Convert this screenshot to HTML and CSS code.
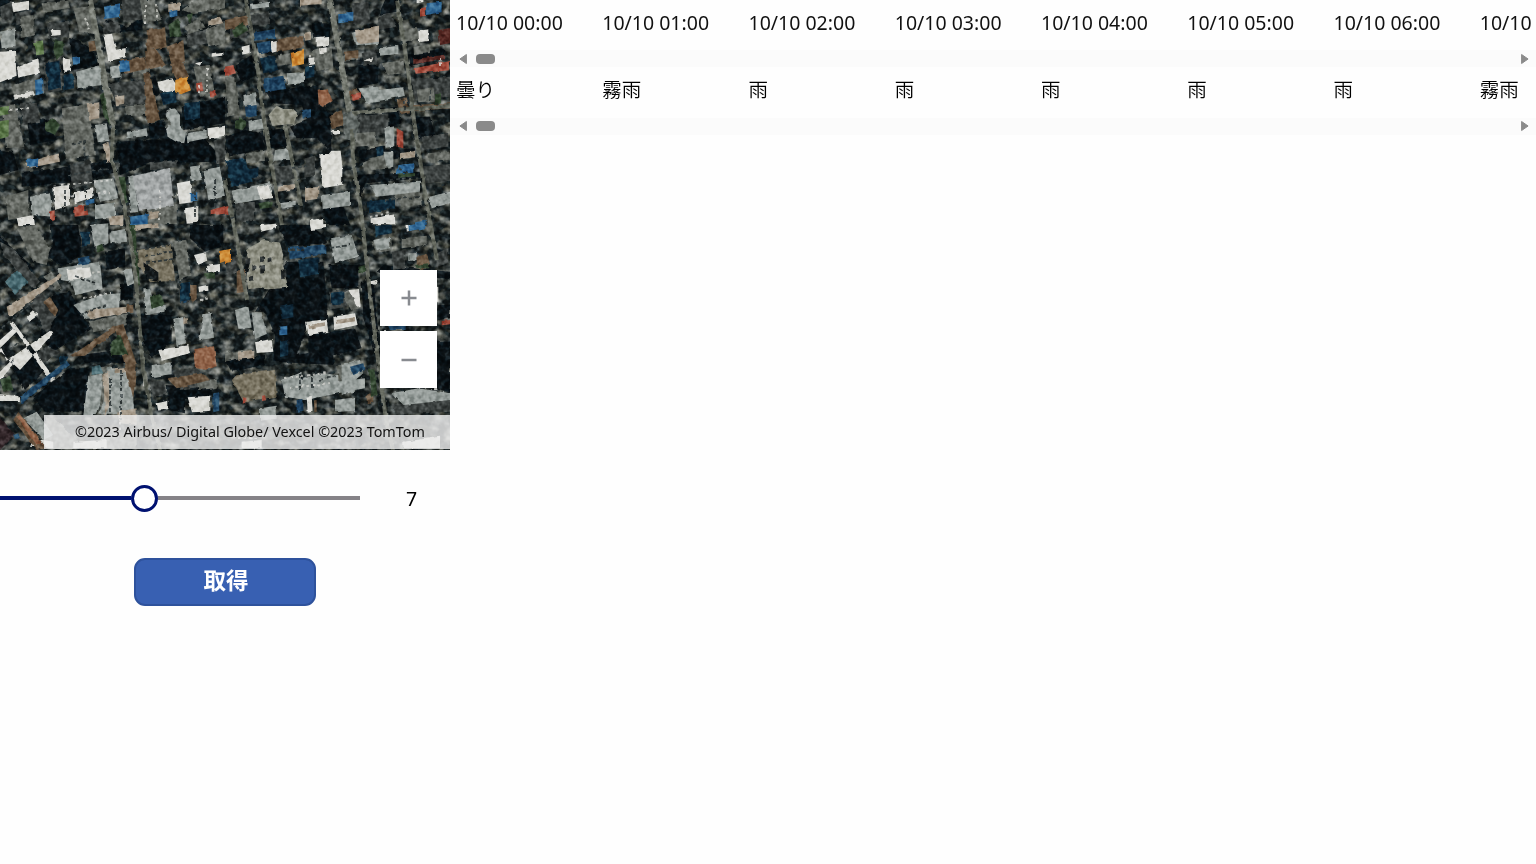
FILE: index.html
```html
<!DOCTYPE html>
<html lang="ja">
<head>
<meta charset="utf-8">
<title>Weather</title>
<link rel="stylesheet" href="styles.css">
</head>
<body>
<div class="app">
  <aside class="side">
    <div class="map">
      <svg class="aerial" viewBox="0 0 450 450" width="450" height="450" aria-hidden="true">
        <defs>
          <filter id="soft" x="0" y="0" width="100%" height="100%" color-interpolation-filters="sRGB">
            <feTurbulence type="fractalNoise" baseFrequency=".12" numOctaves="2" seed="4" result="n"/>
            <feDisplacementMap in="SourceGraphic" in2="n" scale="3.2" xChannelSelector="R" yChannelSelector="G"/>
            <feGaussianBlur stdDeviation=".6"/>
          </filter>
          <filter id="clutter" x="0" y="0" width="100%" height="100%" color-interpolation-filters="sRGB">
            <feTurbulence type="fractalNoise" baseFrequency=".09 .12" numOctaves="2" seed="21"/>
            <feColorMatrix values=".6 2 0 0 -1.15  .55 2 .05 0 -1.15  .45 1.9 .15 0 -1.12  0 0 0 0 1"/>
          </filter>
          <filter id="grain" x="0" y="0" width="100%" height="100%" color-interpolation-filters="sRGB">
            <feTurbulence type="fractalNoise" baseFrequency=".2" numOctaves="2" seed="8"/>
            <feColorMatrix values="1.5 1.5 0 0 -1  1.5 1.5 0 0 -1  1.5 1.5 0 0 -1  0 0 0 0 1"/>
          </filter>
        </defs>
        <rect class="base" width="450" height="450"/>
        <rect class="ground" width="450" height="450" filter="url(#clutter)"/>
        <g filter="url(#soft)">
          <rect class="frame" width="450" height="450"/>
          <!-- north-west block -->
          <g transform="scale(.33333)">
            <path class="shade" d="M350 425l260-15 50 60-10 15-200 5-90 35zM65 520l270-40 20 35-120 30-170 15zM80 350l60 10 30 60-80 15zM210 110l70 40 20 45-80 15zM0 450l40 5 15 55-55 15zM320 60l60 20 50-30-5 40-110 10zM445 370l45-10 20 60-60-5zM545 320l130-30v80l-125 20zM0 0l35 0-10 20-25 10zM465 225l-15 35 20 30 10-10z"/>
            <path class="dim" d="M0 20l35-15 5 50-35 15zM45 40l50-10 0 35-45 10zM140 70l65-5 3 45-60 5zM305 70l50-5 5 30-50 5zM325 250l110-10 5 70-90 10zM365 0l60-5 5 60-60 10zM130 185l50-5 10 90-50 8zM210 490l60-10 10 70-65 15zM450 490l80-10 0 20-80 10zM640 420l35-5v70l-25 5zM60 310l50-5 10 60-50 10zM560 100l60-10 5 40-60 10z"/>
            <path class="grey" d="M60 50l40-5 5 60-40 10zM125 10l80-8 5 22-80 12zM420 0l45 0 20 60-55 10zM185 325l75-12 10-5 28 5v50l-25 5 15 95-90 14zM395 185l50-8 5 40-50 8zM580 200l50-5 15 90-45 5zM555 80l40-25 20 30-50 18zM615 90l60-25v65l-50 12zM375 320l60-8 5 32-60 5zM5 320l40-5 28 125-55 5zM35 255l90-20 5 45-85 20zM220 25l60-8 8 85-50-5zM545 30l50-35 80-5v35l-100 15zM15 590l70-20v80l-60 10zM440 620l90-8v60h-85z"/>
            <path class="light" d="M500 330l25-5 15 20v35l18 20-5 30-25-5-25-15-5-25 12-15-12-20zM0 95l45-10 2 55-42 5zM228 215l75-20 5 60-75 10zM330 200l30-5 2 40-30 3zM380 395l60-10 3 22-60 8zM285 375l35-5 8 52-35 5zM560 400l60-10 0 25-58 12zM90 590l60-10 10 70-65-5zM280 540l60-5 15 60-55 10zM570 500l30-5 5 45-30 3zM610 510l50-10 15 90-50 10zM385 530l15-5 15 110-22 3zM285 615l60-8v45l-60 5z"/>
            <path class="roof" d="M398 528l112-25 12 115-105 15z"/>
            <path class="white" d="M310 104l26-3 12 48 29-5v28l-52 12zM0 155l45-3 5 75-50 20zM50 200l65-22 5 40-65 15zM188 175l22 3 5 35-25 3zM152 90l30 0v15l-25 3zM472 245l45-10 18 30-25 15-30-10zM585 190l20-5-5 12zM635 160l35-5v12l-35 3zM622 385l53-8v30l-50 8zM530 550l40-8 8 65-40 5zM160 560l50-5v60l-45 15zM220 580l60-15v25l-55 20zM555 625l40-7v50l-35 3zM50 655l50-10 5 30h-50zM40 285l60-12 5 13-60 12zM35 10l55-8v25l-50 10z"/>
            <path class="tan" d="M325 425l12 60-15 3-15-55zM505 12l35-5v25l-35 5zM260 312l38-5v48l-30 5zM625 60l35-10 10 20-45 8zM445 635l30-5v25l-28 5zM325 650l45-5v30h-40zM75 490l100-30 5 25-95 20zM345 290l28-4v25l-25 5z"/>
            <path class="brown" d="M440 90l55-8 5 60-60 10zM435 150l35 0 30 45-60 15zM500 140l50-20 5 65-40 10zM430 220l20 0 30 140-40 10zM360 180l75-8 5 35-65 15zM265 125l30-5 3 30-30 5zM510 195l40-8 15 45-35 10z"/>
            <path class="foliage" d="M135 370l25-15 20 20-15 30-30-15zM165 120l25 5v35l-20 20-10-30zM505 75l30-20 10 50-35 10zM560 45l20-8-10 35zM300 285l15-10 30 85-15 15-20-30zM355 530l20 0 10 75-15 10z"/>
            <path class="lime" d="M102 127l27-6 3 42-22 4zM0 322l27-5v25l-27 5zM0 364l26-5v55l-26 5z"/>
            <path class="blue" d="M312 20l48-10v40l-45 7zM355 187l32-8 3 34-30 4zM217 172l23-4v22l-20 5zM105 240l22-4v45l-20 5zM390 650l53-8v30l-50 8zM572 580l20-4v25l-20 4zM80 480l35-5-2 22-30 5zM507 35l25-5v18l-22 5zM258 600l25-4v16l-22 4z"/>
            <path class="orange" d="M526 240l35-9 12 40-30 12-18-6z"/>
            <path class="red" d="M588 250l18-3 4 26-20 2zM628 272l18-6v20l-15 5zM222 622l35-7 5 30-38 5zM632 630l43-12v20l-43 5zM150 635l14-4v30l-14 2z"/>
            <path class="navy" d="M138 190l40-8 5 80-38 10zM480 280l45-8 5 35-40 8zM190 225l28-5 5 45-30 5zM550 310l50-5v50l-45 5z"/>
          </g>
          <!-- north-east block -->
          <g transform="translate(225) scale(.33333)">
            <path class="shade" d="M120 275l160-20 5 60 30 30 5 110-45-40-60 0-20-35 50-20-15-45-90-5zM30 195l50-30 15 60-45 20zM465 325l50-5 15 50-45 15zM400 450l80-10v20l-75 25zM500 450l70-5v20l-65 10zM560 350l55 0 20 70-55-5zM400 525l190-10v20l-170 15-15 60zM260 70l55 0v40l-50 5zM480 0l35 0v35l-55 10zM0 410l60-20 50 10 10 45-110 25zM400 195l60 0v55l-60 10zM100 395l80-10 10 55-60 5zM295 625l60-5 20 55h-70zM540 165l120-20v30l-115 25z"/>
            <path class="dim" d="M75 45l60-8v35l-60 5zM380 10l50-5 5 65-50 5zM460 50l35-10 20 40-60 10zM15 75l50-5v40l-50 8zM390 350l100-10v60l-100 5zM560 240l115-10v60l-105 10zM240 475l30-8v60l-32 6zM590 500l85-8v50l-85 10zM30 610l60-5v55l-55 5zM150 500l60-5v40l-60 8zM590 410l80-10v40l-80 10zM410 160l40-15 10 45-45 8z"/>
            <path class="grey" d="M160 165l35-5 3 32-37 5zM260 150l60-10 5 65-50 8zM340 170l60-15v25l-60 8zM530 90l45-10 10 35-45 10zM390 400l60-5 10 40-70 5zM410 490l70-30 20 45-85 8zM575 270l50-8 5 40-50 5zM610 460l65-8v27l-60 8zM60 460l60-8v30l-55 8zM0 230l30 0 15 110-35 10zM470 190l65-10 5 40-55 5zM565 140l45-6 5 25-48 6zM505 580l80-5 5 40-60 5z"/>
            <path class="stone" d="M130 345l25-28 20 10 30 0 15 15-10 30-68 5z"/>
            <path class="light" d="M380 98l82-17v50l-70 8zM400 265l60-5 5 45-40 5zM460 270l75-8 5 25-75 15zM70 365l48-10 5 30-50 6zM478 385l30-6v60l-25 4zM185 220l52-4v33l-50 5zM55 285l35-5 5 35-35 5zM465 145l55-8v25l-55 5zM610 590l65-15v35l-55 15zM435 555l150-10v30l-130 15zM290 585l85-10v42l-82 10zM150 450l45-6v35l-50 4zM75 15l60-10v15l-58 8zM475 455l30 0v45l-20 5zM20 572l115-25 8 45-115 20zM165 610l50-8v16l-45 8z"/>
            <path class="white" d="M286 462l25 0 8-10 28 0 5 42v60l-60 10-5-60zM580 93l30-5v35l-28 4zM138 127l20-5v32l-20 5zM272 115l40-4v25l-40 4zM320 390l25 0v12l-20 2zM250 175l18-3v20l-16 3zM410 182l35-10-5 12zM285 145l20-3v18l-18 3zM575 0l20 0v6l-20 4zM95 560l35-6 12 40-35 5zM255 660l40-5v20h-40zM440 655l70-12v30h-70zM50 140l24-6v25l-22 5z"/>
            <path class="tan" d="M240 98l18-4v25l-18 3zM390 90l72-10v45l-65 8zM160 560l50-8v15l-50 8zM525 460l45-8v20l-45 6zM240 565l40-4v35l-40 6zM225 0l65 0v12l-65 5z"/>
            <path class="brown" d="M155 115l80-8v35l-80 15zM370 275l20-12 20 20-20 20-20-5zM310 350l40-20 10 45-40 10zM360 155l40-5v25l-40 6zM0 60l70-15 0 30-70 15zM565 315l110-5v15l-110 8zM515 300l30-8 10 45-30 5z"/>
            <path class="blue" d="M340 40l45-5v30l-45 5zM10 482l48-8v22l-48 6zM605 10l45-5v32l-45 8zM520 495l45-5v28l-50 5zM570 667l35-5v13h-35z"/>
            <path class="deep" d="M95 130l40-8 5 35-38 6zM115 235l60-8 8 40-62 10zM60 320l35-4v32l-32 5zM85 98l65-12v28l-60 8zM230 330l28-3v25l-25 4z"/>
            <path class="orange" d="M197 158l40-8v42l-35 8z"/>
            <path class="clay" d="M278 272l30-4 15 35-30 18-12-10z"/>
            <path class="red" d="M568 205l104-22v28l-100 10zM380 282l28-5v20l-25 5zM0 200l25-5 8 25-33 8zM515 385l20 10v50l-20-5zM585 25l18-3v25l-18 3zM0 620l14-3v24l-14 3z"/>
            <path class="maroon" d="M640 90l35-5v45l-30 5zM565 178l95-14v14l-95 14z"/>
            <path class="foliage" d="M30 365l15-15 20 20-15 20-20-5zM20 90l35-25 15 25-40 25zM630 285l18-3v25l-18 5zM520 520l50 0v8l-50 5zM100 610l40-8v20l-35 5z"/>
            <path class="navy" d="M105 175l45-8 10 45-45 8zM65 510l35-8v30l-35 5zM425 605l85-10v30l-80 15zM240 200l28-5v35l-28 5zM455 445l20-5v25l-20 5zM0 480l60-5 20 70-60 15z"/>
          </g>
          <!-- south-west block -->
          <g transform="translate(0 225) scale(.33333)">
            <path class="shade" d="M150 0l85 0 10 90-60 35-45-35 20-30zM210 430l60 0-15 130-120 0-35-45zM415 270l100 0v80l-60 50-25-60zM160 210l50-10 60 110-110 70-40-50zM240 390l150-20 5 45-140-5zM40 430l60-60 35 65-60 60zM570 0l100 0v60l-55 20-45-40zM500 480l135 10v20l-80 15v40l-50-10zM0 30l100 100-5 20-95-90zM360 180l40-10v50l-40 10zM315 80l60-10v55l-55 10z"/>
            <path class="dim" d="M80 225l45-20 45 70-30 50zM450 470l45-5 5 45-45 5zM0 50l40 20 80 100-20 20-90-100zM535 180l35-5v55l-30 5zM520 440l70-10 40 50-90 15zM100 395l40-30 40 15-50 35zM15 170l30-40 45 30-40 50z"/>
            <path class="olive" d="M415 75l100-18 10 110-75 5-35-50z"/>
            <path class="shade" d="M430 112l45 30 0 28-40-8z"/>
            <path class="grey" d="M50 10l60-10 40 70-10 50-40-10zM519 50l40-6 15 110-35 12zM265 290l115-25v35l-100 22zM285 430l50-10 0 120-35 5zM130 155l25-15 30 50-15 5zM135 580l30 0 70 70-20 25-80-5zM590 470l60-6v25l-55 6zM300 620l110 10v40h-110z"/>
            <path class="light" d="M328 20l50-8 3 38-50 5zM270 0l55-5v60l-40 15zM265 455l45-10-10 95-10 30h-40zM370 135l25-5 8 45-20 8zM430 190l20 0 12 55 35-5v20l-60 10zM175 130l125-20 8 80-80 20-15-40-30-5zM220 240l80-30 58-5v62l-100 15zM455 420l60-8v35l-58 10zM520 285l30-10 5 80-25 8zM610 268l22-5 10 75-45 8zM320 425l35 10 40 0 8 135-105-5 20-60zM70 580l40-20 50 70-30 15z"/>
            <path class="white" d="M28 290l12 0 125 172-12 10zM0 380l60 55 100-110-10-8-130 90-25-50zM0 345l40-35 10 10-50 50zM0 440l40-40v20l-40 45zM0 508l55 5 5 15h-60zM475 375l90-15 5 25-85 22zM563 517l68-5v45l-55 5zM582 90l35-8 5 25-30 12zM620 122l40-5v20l-35 5zM470 535l35-8v25l-30 5zM100 640l60 10v20l-70-5zM200 135l70-8 5 30-70 8zM220 650l100-5v25h-100zM595 185l30-6v18l-28 4zM430 460l12-2v20l-12 3zM80 275l20-18 15 12-25 20z"/>
            <path class="tan" d="M20 245l160-100 5 10-145 115-15 0zM310 450l15-10 5 100-15 30zM550 280l15 0v15l-15 3zM260 255l120-10v18l-110 20zM340 430l50-5 5 15-50 5zM400 0l75-5v12l-75 12zM350 560l60-10v50l-50-5z"/>
            <path class="brown" d="M55 560l85 110-30 5-70-90zM570 180l20 0v45l-15 12zM210 395l130-90 30-8 40 120-15 10-40-115-100 80zM345 310l20-10 45 120-10 100zM380 240l20 0v20l-20 2zM130 230l20-15 25 40-10 20zM500 460l110-15 20 20-100 25z"/>
            <path class="plum" d="M0 575l45 55-45 45z"/>
            <path class="foliage" d="M335 350l25-20 25 60-55 0zM285 65l20-8 8 18-20 8zM450 215l30-8 15 30-40 15zM0 463l30-8 10 40-30 5zM615 145l30-5v20l-25 5zM390 0l15 0 15 180-12 5z"/>
            <path class="teal" d="M15 170l35-35 35 35-40 40z"/>
            <path class="clay" d="M580 372l62-8 8 60-30 10-35-5zM50 575l10-5 70 90-20 0z"/>
            <path class="orange" d="M657 78l18-4v35l-15 5z"/>
            <path class="deep" d="M60 515l140-108 10 12-130 105-15 12zM233 100l35-8v25l-30 5zM640 505l18-3v55l-18 5zM40 630l15-5 5 15-15 3zM550 220l10-3v15l-10 3z"/>
            <path class="teal" d="M275 425l25-5 10 25-35 5z"/>
            <path class="navy" d="M540 175l30-5v55l-30 5zM180 390l25 5-10 20-15 5zM240 20l30 0v40l-25 5z"/>
          </g>
          <!-- south-east block -->
          <g transform="translate(225 225) scale(.33333)">
            <path class="shade" d="M185 110l110 0 15 170-55 10-40 100 110-20 0 50-180-10 5-80-30-70-30 0zM410 170l35 0 20 200-20 10-30-100zM160 0l95 0 50 40v15l-120 10zM455 140l20-20 200 20v20h-170zM640 240l35 0v40l-35 5zM635 350l40 0v150l-50-10zM310 120l90 0v70l-80 0zM0 405l120-15v30l-100 20zM250 330l140-20 20 60-160 40z"/>
            <path class="dim" d="M500 80l40-5v55l-35 5zM315 200l55-5v50l-55 8zM500 540l175-20v40l-165 10zM635 85l35-15v45l-35 10zM0 100l35-5v50l-30 5z"/>
            <path class="grey" d="M530 40l75-8v28l-75 10zM440 50l60-15v40l-45 10zM0 385l80-15v20l-80 20zM350 200l50-5 8 55-30 5zM335 420l55-15 0 55-45 0z"/>
            <path class="olive" d="M20 465l15-15 115-15 5 80-100 15z"/>
            <path class="stone" d="M60 75l55-30 50 8 10 35-3 25 18 75-60 5-30-5-30 5-5-45 10-35z"/>
            <path class="light" d="M80 262l30 0 15 65-35 15zM30 255l40-12 10 65-40 3zM315 40l65-10 10 30 10 35-70 20zM170 465l60-25v25l50-20 60 5v55l-100 20-60-10zM350 420l55-15 10 40-30 25 5 30-40 10zM500 505l80-15 95 15v20l-140 15zM330 525l60-8v40l-60 5zM105 550l50-8v40l-50 5zM445 45l50-10v35l-40 8zM335 470l85-10v30l-80 15zM550 85l25 0v20l-25 3z"/>
            <path class="white" d="M243 290l62-8 5 38-60 10zM325 275l65-10 8 35-70 15zM90 352l50-10 5 38-50 4zM105 0l48-4v14l-45 10zM370 195l32-3 5 50-10 3zM258 0l45-3v12l-42 6zM425 175l30-8-3 12zM535 650l110-15v35h-110zM545 0l18 0v15l-18 5zM640 185v45h-6v-45zM50 650l60-5v25h-60zM245 515l12-3 3 45-12 3z"/>
            <path class="tan" d="M38 380l50-6v25l-48 5zM250 300l50-8v10l-48 10zM335 285l55-8v12l-55 8z"/>
            <path class="brown" d="M575 95l30-8 10 30-25 20-15-10zM35 140l25-5v65l-25 5zM425 510l20-10v30l-20 5zM265 525l10 0v35l-10 2z"/>
            <path class="deep" d="M192 68l112-10v30l-110 15zM490 303l55-3v15h-50zM215 525l20-3v35l-20 3zM375 425l40-10 5 20-35 15z"/>
            <path class="blue" d="M163 305l24-3v27l-24 2zM550 0l50-5v15l-48 8z"/>
            <path class="orange" d="M0 75l18-4v40l-18 4z"/>
            <path class="red" d="M650 288l25-3v13l-25 3zM108 513l12-2 3 15-14 2zM55 515l6 0v18l-8 3z"/>
            <path class="foliage" d="M430 430l18 0 10 80-20 10zM400 125l20-5v20l-20 5zM570 120l40-5v15h-35z"/>
            <path class="navy" d="M165 245l40-8v40l-35 5zM220 105l60-8v50l-55 10zM165 350l25-4v45l-25 5zM450 0l50 0v25l-48 8zM318 203l40-5v36l-40 5z"/>
            <path class="car" d="M62 102l14-3v16l-14 3zM82 120l12-2v16l-12 3zM105 95l12-2v16l-12 3zM103 122l14-3v24l-14 3zM75 155l12-3v14l-12 3zM168 138l16-3v22l-16 3zM128 100l14-3v12l-14 3z"/>
          </g>
          <!-- streets -->
          <g class="street">
            <path d="M90 0L102 64L108 100L113 125"/>
            <path class="lane" d="M113 125L112 160L124 205L130 235L136 280L139 320L143 370L152 415L160 450"/>
            <path d="M330 0L341 62L350 115"/>
            <path class="plaza" d="M343 115l12-4 5 12-6 18-10-2z"/>
            <path class="lane" d="M352 130L353 160L361 210L369 285L378 360L386 420L393 450"/>
            <path class="lane" d="M397 0L408 70L414 120L426 200L437 260M246 0L258 70L264 120L276 190L282 225M285 125L301 205M352 113L450 106M225 180L234 225L247 300"/>
          </g>
          <!-- cars, vents and ridge lines -->
          <g class="specks">
            <path d="M145 4v22M157 4v16M207 68v24M199 85v9M310 55v12M62 185l50-5M65 197l45-5M160 190v30M10 110l20-2M85 18l5 12M70 275l30-3M83 298l28-5M120 430v-20M285 378l42-5M290 388l40-5M385 330v10M238 438h20M435 360v30M440 58v10M200 300l10-2M370 217l20-4"/>
          </g>
          <g class="marks">
            <path d="M72 144l12-3 1 22-12 2M2 328l30-26M10 350l28-25M110 378v40M121 370v50M178 278v15M145 249l25-4M145 256l27-4M146 263l27-4M292 168l15-2M296 180l10-2M320 380l16-4M75 276l20 7M80 315l26-10M68 175l40-6M225 220l15-4M394 165l14 8M390 180l18-2M385 200l35-3M300 374v16M312 372v18M290 250h14M330 248l20-3M65 190v24M85 188v24M175 192v12M195 190v30M215 180v30M405 100v12M430 90v14"/>
          </g>
        </g>
        <rect class="texture" width="450" height="450" filter="url(#grain)"/>
      </svg>
      <div class="zoom">
        <button class="zoom-btn" aria-label="Zoom in"><svg width="16" height="16" viewBox="0 0 16 16"><path d="M8 .5V15.5M.5 8H15.5"/></svg></button>
        <button class="zoom-btn zoom-out" aria-label="Zoom out"><svg width="16" height="16" viewBox="0 0 16 16"><path d="M.5 8H15.5"/></svg></button>
      </div>
      <div class="credit"><span>©2023 Airbus/ Digital Globe/ Vexcel ©2023 TomTom</span></div>
    </div>
    <div class="range">
      <div class="track"><div class="fill"></div><div class="knob"></div><div class="rest"></div></div>
      <output class="value">7</output>
    </div>
    <button class="fetch">取得</button>
  </aside>
  <main class="forecast">
    <section class="gallery">
      <div class="cells times"><span>10/10 00:00</span><span>10/10 01:00</span><span>10/10 02:00</span><span>10/10 03:00</span><span>10/10 04:00</span><span>10/10 05:00</span><span>10/10 06:00</span><span>10/10</span></div>
      <div class="scroll"><svg width="8" height="12" viewBox="0 0 8 12"><path d="M7.4 1.5v9L.9 6z"/></svg><i class="thumb"></i><svg class="next" width="8" height="12" viewBox="0 0 8 12"><path d="M.6 1.5v9L7.1 6z"/></svg></div>
    </section>
    <section class="gallery">
      <div class="cells sky"><span>曇り</span><span>霧雨</span><span>雨</span><span>雨</span><span>雨</span><span>雨</span><span>雨</span><span>霧雨</span></div>
      <div class="scroll"><svg width="8" height="12" viewBox="0 0 8 12"><path d="M7.4 1.5v9L.9 6z"/></svg><i class="thumb"></i><svg class="next" width="8" height="12" viewBox="0 0 8 12"><path d="M.6 1.5v9L7.1 6z"/></svg></div>
    </section>
  </main>
</div>
</body>
</html>
```
FILE: styles.css
```css
* { box-sizing: border-box; }
body {
  margin: 0;
  background: #fefefe;
  color: #111;
  font-family: "Noto Sans", "Noto Sans CJK JP", sans-serif;
}
button { font: inherit; padding: 0; }
.app { display: flex; width: 1536px; height: 864px; overflow: hidden; }
.side { width: 450px; flex: none; display: flex; flex-direction: column; }

.map { position: relative; width: 450px; height: 450px; overflow: hidden; }
.aerial { display: block; }
.base { fill: #12191b; }
.ground { mix-blend-mode: screen; opacity: .65; }
.frame { fill: none; }
.street path { fill: none; stroke: #73776e; stroke-width: 6; }
.street .lane { stroke: #62665c; stroke-width: 4; }
.street .plaza { fill: #5f6663; stroke: none; }
.dim { fill: #3b403f; }
.grey { fill: #646862; }
.olive { fill: #77715f; }
.stone { fill: #8f9083; }
.light { fill: #969d9a; }
.roof { fill: #a3a7a7; }
.white { fill: #d9d9d4; }
.tan { fill: #a39888; }
.brown { fill: #66533f; }
.clay { fill: #8e6147; }
.plum { fill: #33272a; }
.foliage { fill: #324530; }
.lime { fill: #5f7a4c; }
.teal { fill: #4a6b72; }
.blue { fill: #2f6591; }
.deep { fill: #1f4361; }
.orange { fill: #cb8934; }
.red { fill: #a04c3c; }
.maroon { fill: #512520; }
.navy { fill: #10293a; }
.car { fill: #2a2f30; }
.shade { fill: #070d12; fill-opacity: .9; }
.specks path { fill: none; stroke: #d5d5d0; stroke-width: 2; stroke-dasharray: 2.5 3; stroke-opacity: .8; }
.marks path { fill: none; stroke: #343c3d; stroke-width: 1.8; stroke-dasharray: 4 2; }
.texture { mix-blend-mode: soft-light; opacity: .5; }

.zoom { position: absolute; top: 270px; left: 380px; display: grid; gap: 5px; }
.zoom-btn {
  display: grid;
  place-items: center;
  width: 57px;
  height: 56px;
  border: 0;
  background: #fff;
}
.zoom-out { height: 57px; }
.zoom-btn path { stroke: #888b90; stroke-width: 2.5; }
.credit {
  position: absolute;
  right: 0;
  bottom: 1px;
  width: 406px;
  height: 34px;
  padding-left: 31px;
  background: rgba(238, 238, 238, .82);
  font: 14.37px/33px "Noto Sans", sans-serif;
  white-space: nowrap;
}

.range { display: flex; align-items: center; height: 96px; }
.track { display: flex; align-items: center; width: 360px; }
.fill { width: 131px; height: 4px; background: #001170; }
.knob { width: 27px; height: 27px; border: 3px solid #001170; border-radius: 50%; background: #fff; margin-top: 1px; }
.rest { flex: 1; height: 4px; background: #858287; }
.value { margin: 2px 0 0 46px; font-size: 19.5px; line-height: 26px; color: #000; }
.fetch {
  width: 182px;
  height: 48px;
  margin: 12px 0 0 134px;
  padding: 0 0 6px 2px;
  border: 2px solid #2e529c;
  border-radius: 11px;
  background: #3860b2;
  color: #fff;
  font: bold 22.5px/30px "Noto Sans CJK JP", sans-serif;
}

.forecast { flex: 1; min-width: 0; }
.gallery { height: 67.5px; overflow: hidden; }
.cells {
  display: grid;
  grid-template-columns: repeat(8, 146.25px);
  height: 50px;
  padding-left: 6px;
  font-size: 19.5px;
  white-space: nowrap;
}
.times { padding-top: 9px; line-height: 27px; }
.sky { padding-top: 7px; line-height: 28px; font-family: "Noto Sans CJK JP", sans-serif; font-weight: 350; color: #000; }
.scroll { display: flex; align-items: center; height: 17px; padding: 0 7px 0 9px; background: #fbfbfb; }
.scroll path { fill: #8a8a8a; stroke: #8a8a8a; stroke-linejoin: round; }
.thumb { width: 19px; height: 10px; margin-left: 9px; border-radius: 4px; background: #8a8a8a; }
.next { margin-left: auto; }
```
